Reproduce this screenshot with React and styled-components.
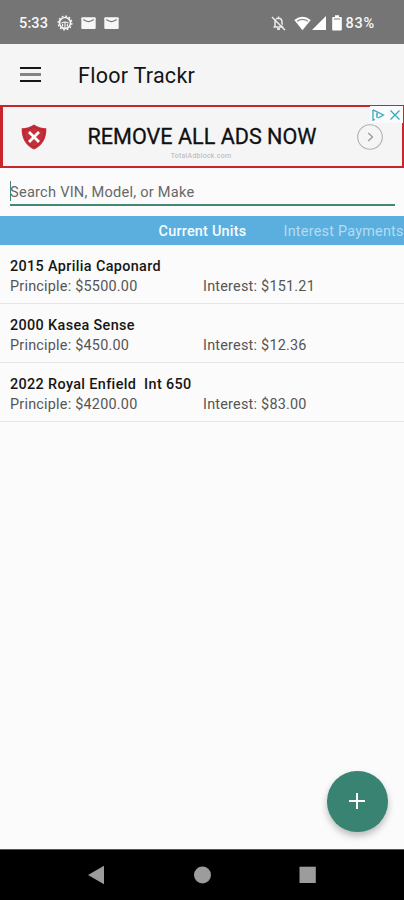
import React from 'react'
import styled, { createGlobalStyle } from 'styled-components'

const GlobalStyle = createGlobalStyle`
* {
    box-sizing: border-box;
}
body {
    margin: 0;
    background-color: #fbfbfb;
    font-family: Roboto, "Liberation Sans", sans-serif;
}
`

const Container = styled.div`
width: 404px;
height: 900px;
display: flex;
flex-direction: column;
overflow: hidden;
background-color: #fbfbfb;
`
const StatusBar = styled.div`
height: 44px;
flex-shrink: 0;
padding: 2px 29px 0 19px;
display: flex;
align-items: center;
justify-content: space-between;
background-color: #757575;
color: #f7f7f7;
`
const StatusGroup = styled.div`
display: flex;
align-items: center;
`
const StatusText = styled.span`
font-size: 14.5px;
font-weight: 500;
line-height: 17px;
margin-left: ${(props) => props.$gap || '0'};
letter-spacing: ${(props) => props.$spacing || '0'};
`
const StatusIcon = styled.svg`
display: block;
margin-left: ${(props) => props.$gap || '0'};
`
const Header = styled.header`
height: 61px;
flex-shrink: 0;
padding: 0 0 0 20px;
display: flex;
align-items: center;
background-color: #f5f5f5;
`
const MenuButton = styled.button`
width: 21px;
height: 15px;
padding: 0;
border: none;
background: none;
display: flex;
flex-direction: column;
justify-content: space-between;
cursor: pointer;
`
const MenuLine = styled.span`
width: 100%;
height: ${(props) => (props.$soft ? '3px' : '2px')};
background-color: ${(props) => (props.$soft ? '#858585' : '#161616')};
`
const Title = styled.h1`
margin: 3px 0 0 37px;
font-size: 21.5px;
font-weight: 400;
line-height: 26px;
letter-spacing: 0.27px;
color: #141414;
`
const Ad = styled.div`
position: relative;
height: 63px;
flex-shrink: 0;
display: flex;
align-items: center;
border: 2px solid #c9252d;
border-left-width: 3px;
background-color: #f5f5f6;
`
const AdBody = styled.div`
position: relative;
margin-left: 38px;
width: 232px;
display: flex;
flex-direction: column;
align-items: center;
`
const AdTitle = styled.div`
font-size: 21.6px;
line-height: 26px;
padding-left: 2px;
white-space: nowrap;
color: #111;
-webkit-text-stroke: 0.3px #111;
`
const AdSource = styled.div`
position: absolute;
top: 28px;
font-size: 7px;
line-height: 8px;
letter-spacing: 0.25px;
color: #b4b4b4;
`
const AdChoices = styled.div`
position: absolute;
top: -1px;
right: -1px;
width: 33px;
height: 17px;
display: flex;
align-items: center;
justify-content: center;
background-color: #fbfbfb;
`
const Search = styled.div`
height: 38px;
flex-shrink: 0;
margin: 0 9px 10px 10px;
padding-top: 12px;
border-bottom: 2px solid #438877;
display: flex;
align-items: center;
`
const Caret = styled.span`
width: 1px;
height: 20px;
margin: -3px -1px 0 0;
background-color: #438877;
`
const Placeholder = styled.span`
font-size: 14.6px;
line-height: 20px;
color: #686868;
letter-spacing: 0.24px;
`
const Tabs = styled.nav`
height: 29px;
flex-shrink: 0;
padding: 2px 0 0 158px;
display: flex;
align-items: center;
gap: 37px;
background-color: #5bafdf;
white-space: nowrap;
`
const Tab = styled.span`
width: ${(props) => props.$width};
padding-left: 0.5px;
font-size: 14.4px;
font-weight: ${(props) => (props.$active ? 500 : 400)};
color: ${(props) => (props.$active ? '#f7fcff' : '#b3dcf3')};
letter-spacing: 0.24px;
`
const Units = styled.div`
flex: 1;
`
const Unit = styled.div`
height: 59px;
padding: 12px 10px 0;
border-bottom: 1px solid #e6e6e6;
`
const UnitName = styled.div`
font-size: 14.4px;
font-weight: 500;
line-height: 20px;
letter-spacing: 0.36px;
white-space: pre;
color: #161616;
`
const UnitInfo = styled.div`
display: grid;
grid-template-columns: 193px 1fr;
font-size: 14.4px;
line-height: 20px;
letter-spacing: 0.23px;
color: #555;
`
const AddButton = styled.button`
position: absolute;
left: 327px;
top: 771px;
width: 60.5px;
height: 60.5px;
padding: 0;
border: none;
border-radius: 50%;
display: flex;
align-items: center;
justify-content: center;
background-color: #388372;
box-shadow: 0 4px 7px rgba(0, 0, 0, 0.26);
cursor: pointer;
`
const NavBar = styled.div`
height: 51px;
flex-shrink: 0;
padding-left: 87px;
border-top: 1px solid #555;
display: flex;
align-items: center;
background-color: #000;
`

const units = [
    { name: '2015 Aprilia Caponard', principle: '5500.00', interest: '151.21' },
    { name: '2000 Kasea Sense', principle: '450.00', interest: '12.36' },
    { name: '2022 Royal Enfield  Int 650', principle: '4200.00', interest: '83.00' },
]

const Mail = ({ gap }) => (
    <StatusIcon $gap={gap} width="15" height="12" viewBox="0 0 15 12">
        <rect x="0.3" y="0.3" width="14.4" height="11.6" rx="1" fill="#f7f7f7" />
        <path d="M2.3 2.6 Q7.5 6.6 12.7 2.6" fill="none" stroke="#757575" strokeWidth="1.2" />
    </StatusIcon>
)

const App = () => {
    return (
        <Container>
            <GlobalStyle />
            <StatusBar>
                <StatusGroup>
                    <StatusText $spacing="0.15px">5:33</StatusText>
                    <StatusIcon $gap="8.5px" width="16" height="16" viewBox="0 0 16 16" fill="none" stroke="#f7f7f7">
                        <circle cx="8" cy="8" r="6.9" strokeWidth="1.2" strokeDasharray="1.9 1.71" />
                        <circle cx="8" cy="8" r="5.5" strokeWidth="1.6" />
                        <path d="M8 13 V7 M5.6 11.5 V9 M10.4 11.5 V9 M4.5 8.3 Q8 5.8 11.5 8.3" strokeWidth="1.1" />
                    </StatusIcon>
                    <Mail gap="8.5px" />
                    <Mail gap="8px" />
                </StatusGroup>
                <StatusGroup>
                    <StatusIcon width="15" height="16" viewBox="0 0 15 16" fill="none" stroke="#ededed">
                        <path d="M4 11.5 V7 Q4 3.5 7.5 3.3 Q11 3.5 11 7 V11.5 M2.5 12 H12.5 M7.5 1.5 V3.5" strokeWidth="1.5" />
                        <path d="M6 14 H9" strokeWidth="1.8" />
                        <path d="M1 2 L14 15" strokeWidth="1.5" />
                        <path d="M2.2 1.4 L14.6 13.8" stroke="#757575" strokeWidth="0.8" />
                    </StatusIcon>
                    <StatusIcon $gap="7.5px" width="17" height="15" viewBox="0 0 17 15">
                        <path d="M0.3 4 Q8.5 -2.6 16.7 4 L8.5 14.2 Z" fill="#fff" />
                        <path d="M3 5.3 Q8.5 1.3 14 5.3" fill="none" stroke="#8a8a8a" strokeWidth="1.2" />
                    </StatusIcon>
                    <StatusIcon $gap="1px" width="14" height="14" viewBox="0 0 14 14">
                        <path d="M14 0 V14 H0 Z" fill="#fff" />
                    </StatusIcon>
                    <StatusIcon $gap="6px" width="10" height="16" viewBox="0 0 10 16">
                        <path d="M3 0.3 H7 V2 H9.2 Q9.8 2 9.8 2.7 V14.8 Q9.8 15.6 9 15.6 H1 Q0.2 15.6 0.2 14.8 V2.7 Q0.2 2 0.8 2 H3 Z" fill="#fff" />
                        <path d="M2 4 H8" stroke="#9a9a9a" strokeWidth="1.3" />
                    </StatusIcon>
                    <StatusText $gap="3.5px" $spacing="0.8px">83%</StatusText>
                </StatusGroup>
            </StatusBar>
            <Header>
                <MenuButton aria-label="Menu">
                    <MenuLine />
                    <MenuLine $soft />
                    <MenuLine />
                </MenuButton>
                <Title>Floor Trackr</Title>
            </Header>
            <Ad>
                <StatusIcon $gap="18px" width="26" height="26" viewBox="0 0 26 26">
                    <path d="M13 0.5 Q18 4 25.3 4.2 Q26 19 13 25.6 Q0 19 0.7 4.2 Q8 4 13 0.5 Z" fill="#c5303a" />
                    <path d="M13 2.8 Q17.5 5.8 23.3 6 Q23.4 18 13 23.4 Q2.6 18 2.7 6 Q8.5 5.8 13 2.8 Z" fill="none" stroke="#a8222c" strokeWidth="0.8" />
                    <path d="M8 8 L18 18 M18 8 L8 18" stroke="#fff" strokeWidth="2.8" />
                </StatusIcon>
                <AdBody>
                    <AdTitle>REMOVE ALL ADS NOW</AdTitle>
                    <AdSource>TotalAdblock.com</AdSource>
                </AdBody>
                <StatusIcon $gap="40px" width="26" height="26" viewBox="0 0 26 26" fill="none">
                    <circle cx="13" cy="13" r="12.3" stroke="#b2b2b2" strokeWidth="1.1" />
                    <path d="M11.3 9 L15.5 13 L11.3 17" stroke="#999" strokeWidth="1.3" />
                </StatusIcon>
                <AdChoices>
                    <svg width="29" height="12" viewBox="0 0 29 12" fill="none" stroke="#35a9c6" strokeWidth="1.3">
                        <path d="M1 0.8 V11.2 L3 10.5 M1 0.8 L11.5 6 L6 9" />
                        <path d="M5 3.8 V8.8" strokeWidth="1.5" />
                        <path d="M18.5 1.5 L27.5 10.5 M27.5 1.5 L18.5 10.5" />
                    </svg>
                </AdChoices>
            </Ad>
            <Search>
                <Caret />
                <Placeholder>Search VIN, Model, or Make</Placeholder>
            </Search>
            <Tabs>
                <Tab $active $width="88px">Current Units</Tab>
                <Tab $width="121px">Interest Payments</Tab>
            </Tabs>
            <Units>
                {units.map((unit) => (
                    <Unit key={unit.name}>
                        <UnitName>{unit.name}</UnitName>
                        <UnitInfo>
                            <span>Principle: ${unit.principle}</span>
                            <span>Interest: ${unit.interest}</span>
                        </UnitInfo>
                    </Unit>
                ))}
            </Units>
            <AddButton aria-label="Add unit">
                <svg width="16" height="16" viewBox="0 0 16 16" stroke="#fff" strokeWidth="2">
                    <path d="M8 0 V16 M0 8 H16" />
                </svg>
            </AddButton>
            <NavBar>
                <svg width="232" height="20" viewBox="0 0 232 20" fill="#9c9c9c">
                    <path d="M1 10 L17 0.8 V19.2 Z" />
                    <circle cx="115.5" cy="10" r="8.5" />
                    <rect x="212.5" y="1.7" width="16.3" height="16.3" />
                </svg>
            </NavBar>
        </Container>
    )
}

export default App
